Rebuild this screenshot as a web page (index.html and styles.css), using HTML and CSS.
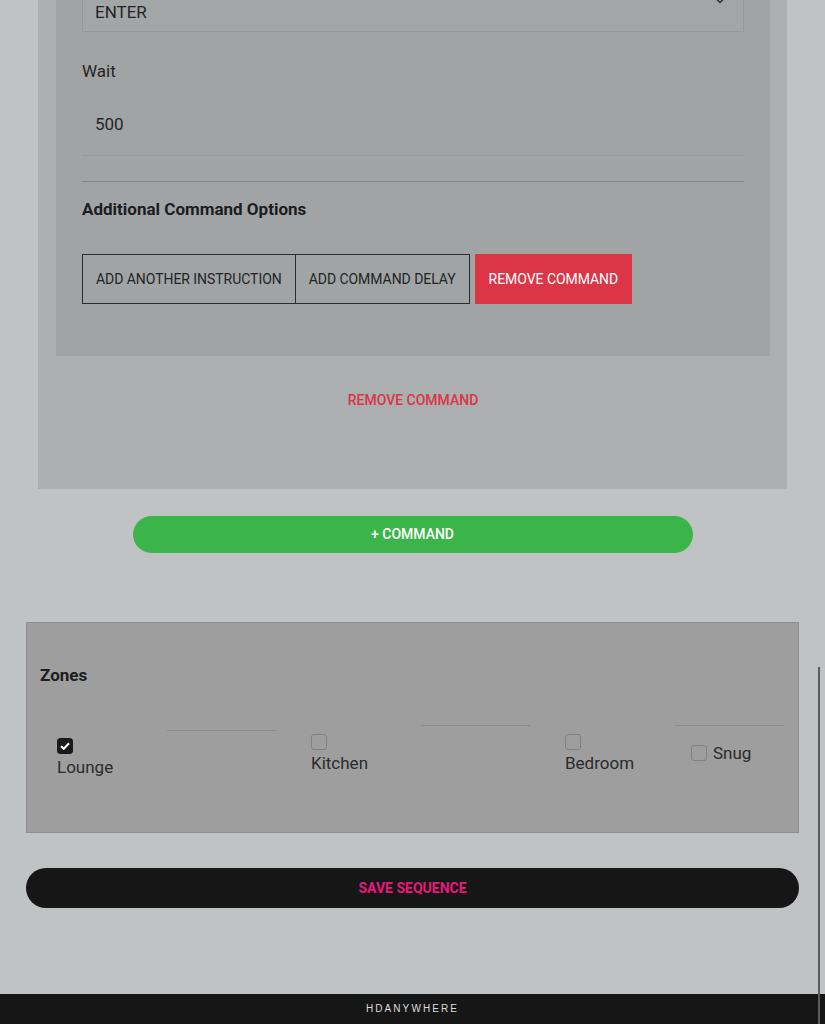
FILE: index.html
```html
<!DOCTYPE html>
<html lang="en">
<head>
    <meta charset="UTF-8">
    <meta name="viewport" content="width=device-width, initial-scale=1.0">
    <title>Edit Sequence</title>
    <link rel="stylesheet" href="styles.css">
</head>
<body>

<main class="page">
    <section class="command-list">
        <div class="command">
            <div class="select-box">
                <span class="select-value">ENTER</span>
                <svg class="select-arrow" width="12" height="8" viewBox="0 0 12 8">
                    <path d="M1 1.5 L6 6.5 L11 1.5" fill="none" stroke="#2f3131" stroke-width="1.5"/>
                </svg>
            </div>

            <label class="field-label">Wait</label>
            <div class="text-field">500</div>

            <hr class="divider">

            <h3 class="section-title">Additional Command Options</h3>

            <div class="command-actions">
                <div class="btn-group">
                    <button class="btn btn-outline">Add another instruction</button>
                    <button class="btn btn-outline">Add command delay</button>
                </div>
                <button class="btn btn-danger">Remove command</button>
            </div>
        </div>

        <a href="#" class="remove-link">Remove command</a>
    </section>

    <button class="btn-pill btn-add">+ Command</button>

    <section class="zones">
        <h3 class="section-title">Zones</h3>
        <div class="zone-row">
            <div class="zone zone-first">
                <div class="zone-item">
                    <span class="check checked">
                        <svg width="10" height="8" viewBox="0 0 10 8"><path d="M1 4.2 L3.8 6.8 L9 1.2" fill="none" stroke="#fff" stroke-width="2"/></svg>
                    </span>
                    <span class="zone-name">Lounge</span>
                </div>
                <div class="zone-rule"></div>
            </div>
            <div class="zone">
                <div class="zone-item">
                    <span class="check"></span>
                    <span class="zone-name">Kitchen</span>
                </div>
                <div class="zone-rule"></div>
            </div>
            <div class="zone">
                <div class="zone-item">
                    <span class="check"></span>
                    <span class="zone-name">Bedroom</span>
                </div>
                <div class="zone-last">
                    <div class="zone-rule"></div>
                    <div class="zone-inline">
                        <span class="check"></span>
                        <span class="zone-name">Snug</span>
                    </div>
                </div>
            </div>
        </div>
    </section>

    <button class="btn-pill btn-save">Save sequence</button>
</main>

<footer class="footer">HDANYWHERE</footer>

<div class="scroll-thumb"></div>

</body>
</html>
```

FILE: styles.css
```css
body {
    font-family: Roboto, "Liberation Sans", sans-serif;
    margin: 0;
    padding: 0;
    background-color: #bfc3c4;
    color: #232424;
}
.page {
    padding: 0 26px;
}
.command-list {
    margin: -30px 12px 0;
    padding: 0 17px 80px 18px;
    background-color: #abafb0;
    text-align: center;
}
.command {
    background-color: #a1a4a5;
    padding: 22px 26px 52px;
    text-align: left;
}
.select-box {
    position: relative;
    height: 40px;
    box-sizing: border-box;
    border: 1px solid #959899;
    background-color: #a3a6a7;
    padding: 0 12px;
    font-size: 17px;
    line-height: 38px;
}
.select-arrow {
    position: absolute;
    top: 3px;
    right: 17px;
}
.field-label {
    display: block;
    margin-top: 29px;
    font-size: 17px;
    line-height: 20px;
}
.text-field {
    margin-top: 13px;
    padding: 20px 13px 21px;
    font-size: 17px;
    line-height: 20px;
    border-bottom: 1px solid #959899;
}
.divider {
    margin: 25px 0 0;
    border: none;
    border-top: 1px solid #818586;
}
.section-title {
    margin: 17px 0 0;
    font-size: 17px;
    line-height: 20px;
    font-weight: 700;
    color: #1c1d1d;
}
.command-actions {
    display: flex;
    gap: 5px;
    margin-top: 35px;
}
.btn-group {
    display: flex;
}
.btn {
    height: 50px;
    padding: 0 13px;
    font-family: Roboto, "Liberation Sans", sans-serif;
    font-size: 14px;
    letter-spacing: -0.05px;
    text-transform: uppercase;
    cursor: pointer;
}
.btn-outline {
    background: transparent;
    border: 1px solid #2b2c2c;
    color: #232424;
}
.btn-outline + .btn-outline {
    margin-left: -1px;
}
.btn-danger {
    background-color: #dc3545;
    border: 1px solid #dc3545;
    color: white;
}
.remove-link {
    display: inline-block;
    margin-top: 36px;
    font-size: 14px;
    line-height: 16px;
    font-weight: 500;
    color: #dc3545;
    text-decoration: none;
    text-transform: uppercase;
}
.btn-pill {
    display: block;
    border: none;
    font-family: Roboto, "Liberation Sans", sans-serif;
    font-size: 14px;
    font-weight: 500;
    text-transform: uppercase;
    cursor: pointer;
}
.btn-add {
    width: 560px;
    height: 37px;
    margin: 27px auto 0;
    padding-bottom: 2px;
    border-radius: 19px;
    background-color: #3bb54a;
    color: white;
}
.zones {
    margin-top: 69px;
    padding: 42px 13px 55px;
    background-color: #9e9e9e;
    border: 1px solid #8d8e8e;
}
.zones .section-title {
    margin: 0;
}
.zone-row {
    display: flex;
    align-items: flex-start;
    gap: 35px;
    margin-top: 40px;
    padding-left: 17px;
}
.zone {
    display: flex;
    align-items: flex-start;
}
.zone-first {
    margin-top: 5px;
}
.zone-item {
    display: flex;
    flex-direction: column;
    align-items: flex-start;
    width: 110px;
    margin-top: 9px;
}
.zone-first .zone-item {
    margin-top: 8px;
}
.zone-rule {
    width: 109px;
    border-top: 1px solid #8a8b8b;
}
.zone-name {
    margin-top: 3px;
    font-size: 17px;
    line-height: 20px;
    color: #2a2b2b;
}
.check {
    display: flex;
    align-items: center;
    justify-content: center;
    width: 16px;
    height: 16px;
    box-sizing: border-box;
    border: 1px solid #808181;
    border-radius: 3px;
}
.check.checked {
    background-color: #1a1a1a;
    border-color: #1a1a1a;
}
.zone-inline {
    display: flex;
    align-items: center;
    gap: 6px;
    margin: 17px 0 0 16px;
}
.zone-inline .zone-name {
    margin-top: 0;
}
.btn-save {
    width: 100%;
    height: 40px;
    margin-top: 35px;
    border-radius: 20px;
    background-color: #161616;
    color: #ea167c;
    font-weight: 700;
}
.footer {
    margin-top: 86px;
    height: 30px;
    line-height: 30px;
    background-color: #161616;
    color: #dcdcdc;
    text-align: center;
    font-family: "Liberation Sans", sans-serif;
    font-size: 10px;
    letter-spacing: 2.1px;
}
.scroll-thumb {
    position: fixed;
    top: 667px;
    right: 5px;
    width: 2px;
    height: 357px;
    background-color: #5a5b5b;
}
```
